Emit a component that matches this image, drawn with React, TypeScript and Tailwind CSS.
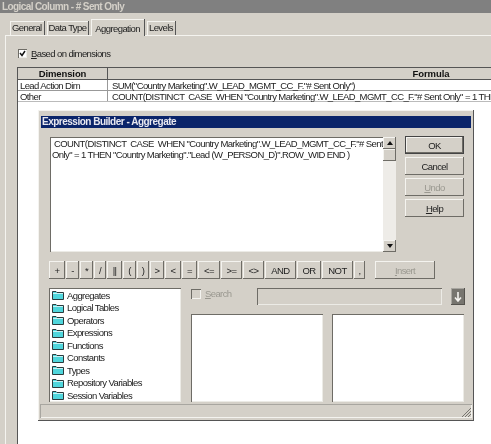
import React from 'react';

const font = "font-['Liberation_Sans',Arial,sans-serif]";
const raised = 'bg-[#d4d0c8] shadow-[inset_-1px_-1px_#6e6c66,inset_1px_1px_#f4f3ef]';
const sunken = 'bg-white shadow-[inset_1px_1px_#6e6c66,inset_-1px_-1px_#ecebe6]';

const operators = [
  { label: '+', w: 'w-[16px]' },
  { label: '-', w: 'w-[13px]' },
  { label: '*', w: 'w-[13px]' },
  { label: '/', w: 'w-[12px]' },
  { label: '||', w: 'w-[15px]' },
  { label: '(', w: 'w-[13px]' },
  { label: ')', w: 'w-[12px]' },
  { label: '>', w: 'w-[14px]' },
  { label: '<', w: 'w-[16px]' },
  { label: '=', w: 'w-[15px]' },
  { label: '<=', w: 'w-[22px]' },
  { label: '>=', w: 'w-[21px]' },
  { label: '<>', w: 'w-[21px]' },
  { label: 'AND', w: 'w-[31px]' },
  { label: 'OR', w: 'w-[24px]' },
  { label: 'NOT', w: 'w-[31px]' },
  { label: ',', w: 'w-[11px]' },
];

const treeItems = [
  'Aggregates',
  'Logical Tables',
  'Operators',
  'Expressions',
  'Functions',
  'Constants',
  'Types',
  'Repository Variables',
  'Session Variables',
];

function Folder() {
  return (
    <svg width="12" height="10" viewBox="0 0 12 10" className="shrink-0">
      <path d="M0.5 9.5V1.5H4L5 2.5H11.5V9.5Z" fill="#4fd6dc" stroke="#2b3a3c" />
      <path d="M1 3.5H11" stroke="#c9f3f5" />
    </svg>
  );
}

function Tab({ label, active }: { label: string; active?: boolean }) {
  return active ? (
    <div className="h-[17px] px-[4px] pt-[4px] text-[#222] border-r border-[#555] -mb-px bg-[#d4d0c8] z-10 shadow-[inset_1px_1px_#f4f3ef]">
      {label}
    </div>
  ) : (
    <div className="h-[14px] px-[2px] pt-px text-[#222] border-r border-[#555] shadow-[inset_1px_1px_#f4f3ef]">
      {label}
    </div>
  );
}

function SideButton({ label, disabled, cls }: { label: React.ReactNode; disabled?: boolean; cls?: string }) {
  return (
    <div className={`w-[59px] h-[18px] flex items-center justify-center ${raised} ${disabled ? 'text-[#9a9890]' : 'text-[#222]'} ${cls ?? ''}`}>
      {label}
    </div>
  );
}

export default function App() {
  return (
    <div className={`relative w-[491px] h-[444px] overflow-hidden bg-[#d4d0c8] text-[9.5px] tracking-[-0.6px] leading-[11px] text-[#222] ${font} blur-[0.3px]`}>
      <div className="h-[13px] bg-[#808080] pl-[2px] font-bold text-[10px] tracking-[-0.6px] leading-[13px] text-[#d4d0c8]">
        Logical Column - # Sent Only
      </div>

      {/* tabs */}
      <div className="h-[22px] pl-[10px] flex items-end gap-[2px]">
        <Tab label="General" />
        <Tab label="Data Type" />
        <Tab label="Aggregation" active />
        <Tab label="Levels" />
      </div>

      {/* tab page */}
      <div className="ml-[5px] h-[409px] border-t border-l border-[#f4f3ef] pl-[11px]">
        <div className="h-[31px] flex items-center gap-[4px] pl-px pt-[3px]">
          <div className={`w-[9px] h-[9px] flex items-center justify-center ${sunken} bg-[#eeeee8]`}>
            <svg width="7" height="7" viewBox="0 0 7 7">
              <path d="M1 3L3 5.5L6 1" fill="none" stroke="#111" strokeWidth="1.5" />
            </svg>
          </div>
          <span><span className="underline">B</span>ased on dimensions</span>
        </div>

        {/* table */}
        <div className="w-[800px] h-[400px] bg-white border-t border-l border-[#555]">
          <div className="flex h-[12px] bg-[#d4d0c8] border-b border-[#555] font-bold text-[9.5px] tracking-[-0.1px] leading-[11px] text-center text-[#111]">
            <div className="w-[90px] border-r border-[#555]">Dimension</div>
            <div className="w-[646px]">Formula</div>
          </div>
          <div className="flex h-[11px] border-b border-[#999]">
            <div className="w-[90px] pl-[2px] border-r border-[#999]">Lead Action Dim</div>
            <div className="pl-[4px] whitespace-pre">SUM("Country Marketing".W_LEAD_MGMT_CC_F."# Sent Only")</div>
          </div>
          <div className="flex h-[11px] border-b border-[#bbb]">
            <div className="w-[90px] pl-[2px] border-r border-[#999]">Other</div>
            <div className="pl-[4px] whitespace-pre">COUNT(DISTINCT  CASE  WHEN "Country Marketing".W_LEAD_MGMT_CC_F."# Sent Only" = 1 THEN</div>
          </div>
        </div>
      </div>

      {/* dialog sits on top of the table */}
      <div className="absolute left-[38px] top-[110px] w-[436px] h-[311px] bg-[#d4d0c8] p-[3px] pt-[6px] shadow-[inset_-1px_-1px_#555,inset_1px_1px_#f4f3ef]">
        <div className="h-[12px] bg-[#0a246a] pl-px font-bold text-[10px] tracking-[-0.5px] leading-[12px] text-[#e8e8f0]">
          Expression Builder - Aggregate
        </div>

        <div className="pl-[8px] pt-[9px]">
          <div className="flex">
            {/* expression box */}
            <div className={`ml-px w-[346px] h-[115px] flex ${sunken}`}>
              <div className="flex-1 min-w-0 overflow-hidden pl-[2px] pt-[2px] leading-[10.5px] whitespace-pre">
                {' COUNT(DISTINCT  CASE  WHEN "Country Marketing".W_LEAD_MGMT_CC_F."# Sent\nOnly" = 1 THEN "Country Marketing"."Lead (W_PERSON_D)".ROW_WID END )'}
              </div>
              <div className="w-[13px] shrink-0 flex flex-col bg-[#eeece8]">
                <div className={`h-[12px] flex items-center justify-center ${raised}`}>
                  <svg width="6" height="4" viewBox="0 0 6 4"><path d="M3 0L6 4H0Z" fill="#111" /></svg>
                </div>
                <div className={`h-[12px] ${raised}`} />
                <div className="flex-1" />
                <div className={`h-[12px] flex items-center justify-center ${raised}`}>
                  <svg width="6" height="4" viewBox="0 0 6 4"><path d="M3 4L6 0H0Z" fill="#111" /></svg>
                </div>
              </div>
            </div>

            {/* OK / Cancel / Undo / Help */}
            <div className="ml-[9px] flex flex-col gap-[3px] -mt-px">
              <SideButton label="OK" cls="shadow-[inset_-1px_-1px_#444,inset_1px_1px_#444,inset_-2px_-2px_#6e6c66,inset_2px_2px_#f4f3ef]" />
              <SideButton label="Cancel" />
              <SideButton label={<><span className="underline">U</span>ndo</>} disabled />
              <SideButton label={<><span className="underline">H</span>elp</>} />
            </div>
          </div>

          {/* operator buttons */}
          <div className="flex mt-[9px] gap-px">
            {operators.map((op) => (
              <div key={op.label} className={`${op.w} h-[18px] flex items-center justify-center ${raised}`}>
                {op.label}
              </div>
            ))}
            <div className={`ml-[9px] w-[60px] h-[18px] flex items-center justify-center text-[#9a9890] ${raised}`}>
              <span><span className="underline">I</span>nsert</span>
            </div>
          </div>

          <div className="flex mt-[9px]">
            {/* folder tree */}
            <div className={`w-[132px] h-[114px] pl-[3px] pt-px ${sunken}`}>
              {treeItems.map((item) => (
                <div key={item} className="h-[12.5px] flex items-center gap-[3px]">
                  <Folder />
                  <span>{item}</span>
                </div>
              ))}
            </div>

            <div className="ml-[10px] w-[274px]">
              <div className="flex h-[17px]">
                <div className="w-[66px] flex items-start gap-[4px] pt-px text-[#9a9890]">
                  <div className="w-[10px] h-[10px] bg-[#d4d0c8] shadow-[inset_1px_1px_#6e6c66,inset_-1px_-1px_#f4f3ef]" />
                  <span className="leading-[10px]"><span className="underline">S</span>earch</span>
                </div>
                <div className="w-[185px] bg-[#d4d0c8] shadow-[inset_1px_1px_#6e6c66,inset_-1px_-1px_#ecebe6]" />
                <div className="ml-[9px] w-[14px] bg-[#77756f] flex items-center justify-center shadow-[inset_-1px_-1px_#55534e,inset_1px_1px_#a8a6a0]">
                  <svg width="8" height="10" viewBox="0 0 8 10">
                    <path d="M4 0V8M1 5.5L4 9L7 5.5" fill="none" stroke="#f4f3ef" strokeWidth="1.6" />
                  </svg>
                </div>
              </div>
              <div className="flex gap-[9px] mt-[9px]">
                <div className={`w-[132px] h-[88px] ${sunken}`} />
                <div className={`w-[132px] h-[88px] ${sunken}`} />
              </div>
            </div>
          </div>
        </div>

        {/* status bar */}
        <div className="relative -mx-px mt-[2px] h-[14px] shadow-[inset_1px_1px_#a8a6a0,inset_-1px_-1px_#f4f3ef] overflow-hidden">
          <svg width="12" height="12" viewBox="0 0 12 12" className="absolute right-0 bottom-0">
            <path d="M11 2L2 11M11 5L5 11M11 8L8 11" stroke="#77756f" strokeWidth="1" />
          </svg>
        </div>
      </div>
    </div>
  );
}
